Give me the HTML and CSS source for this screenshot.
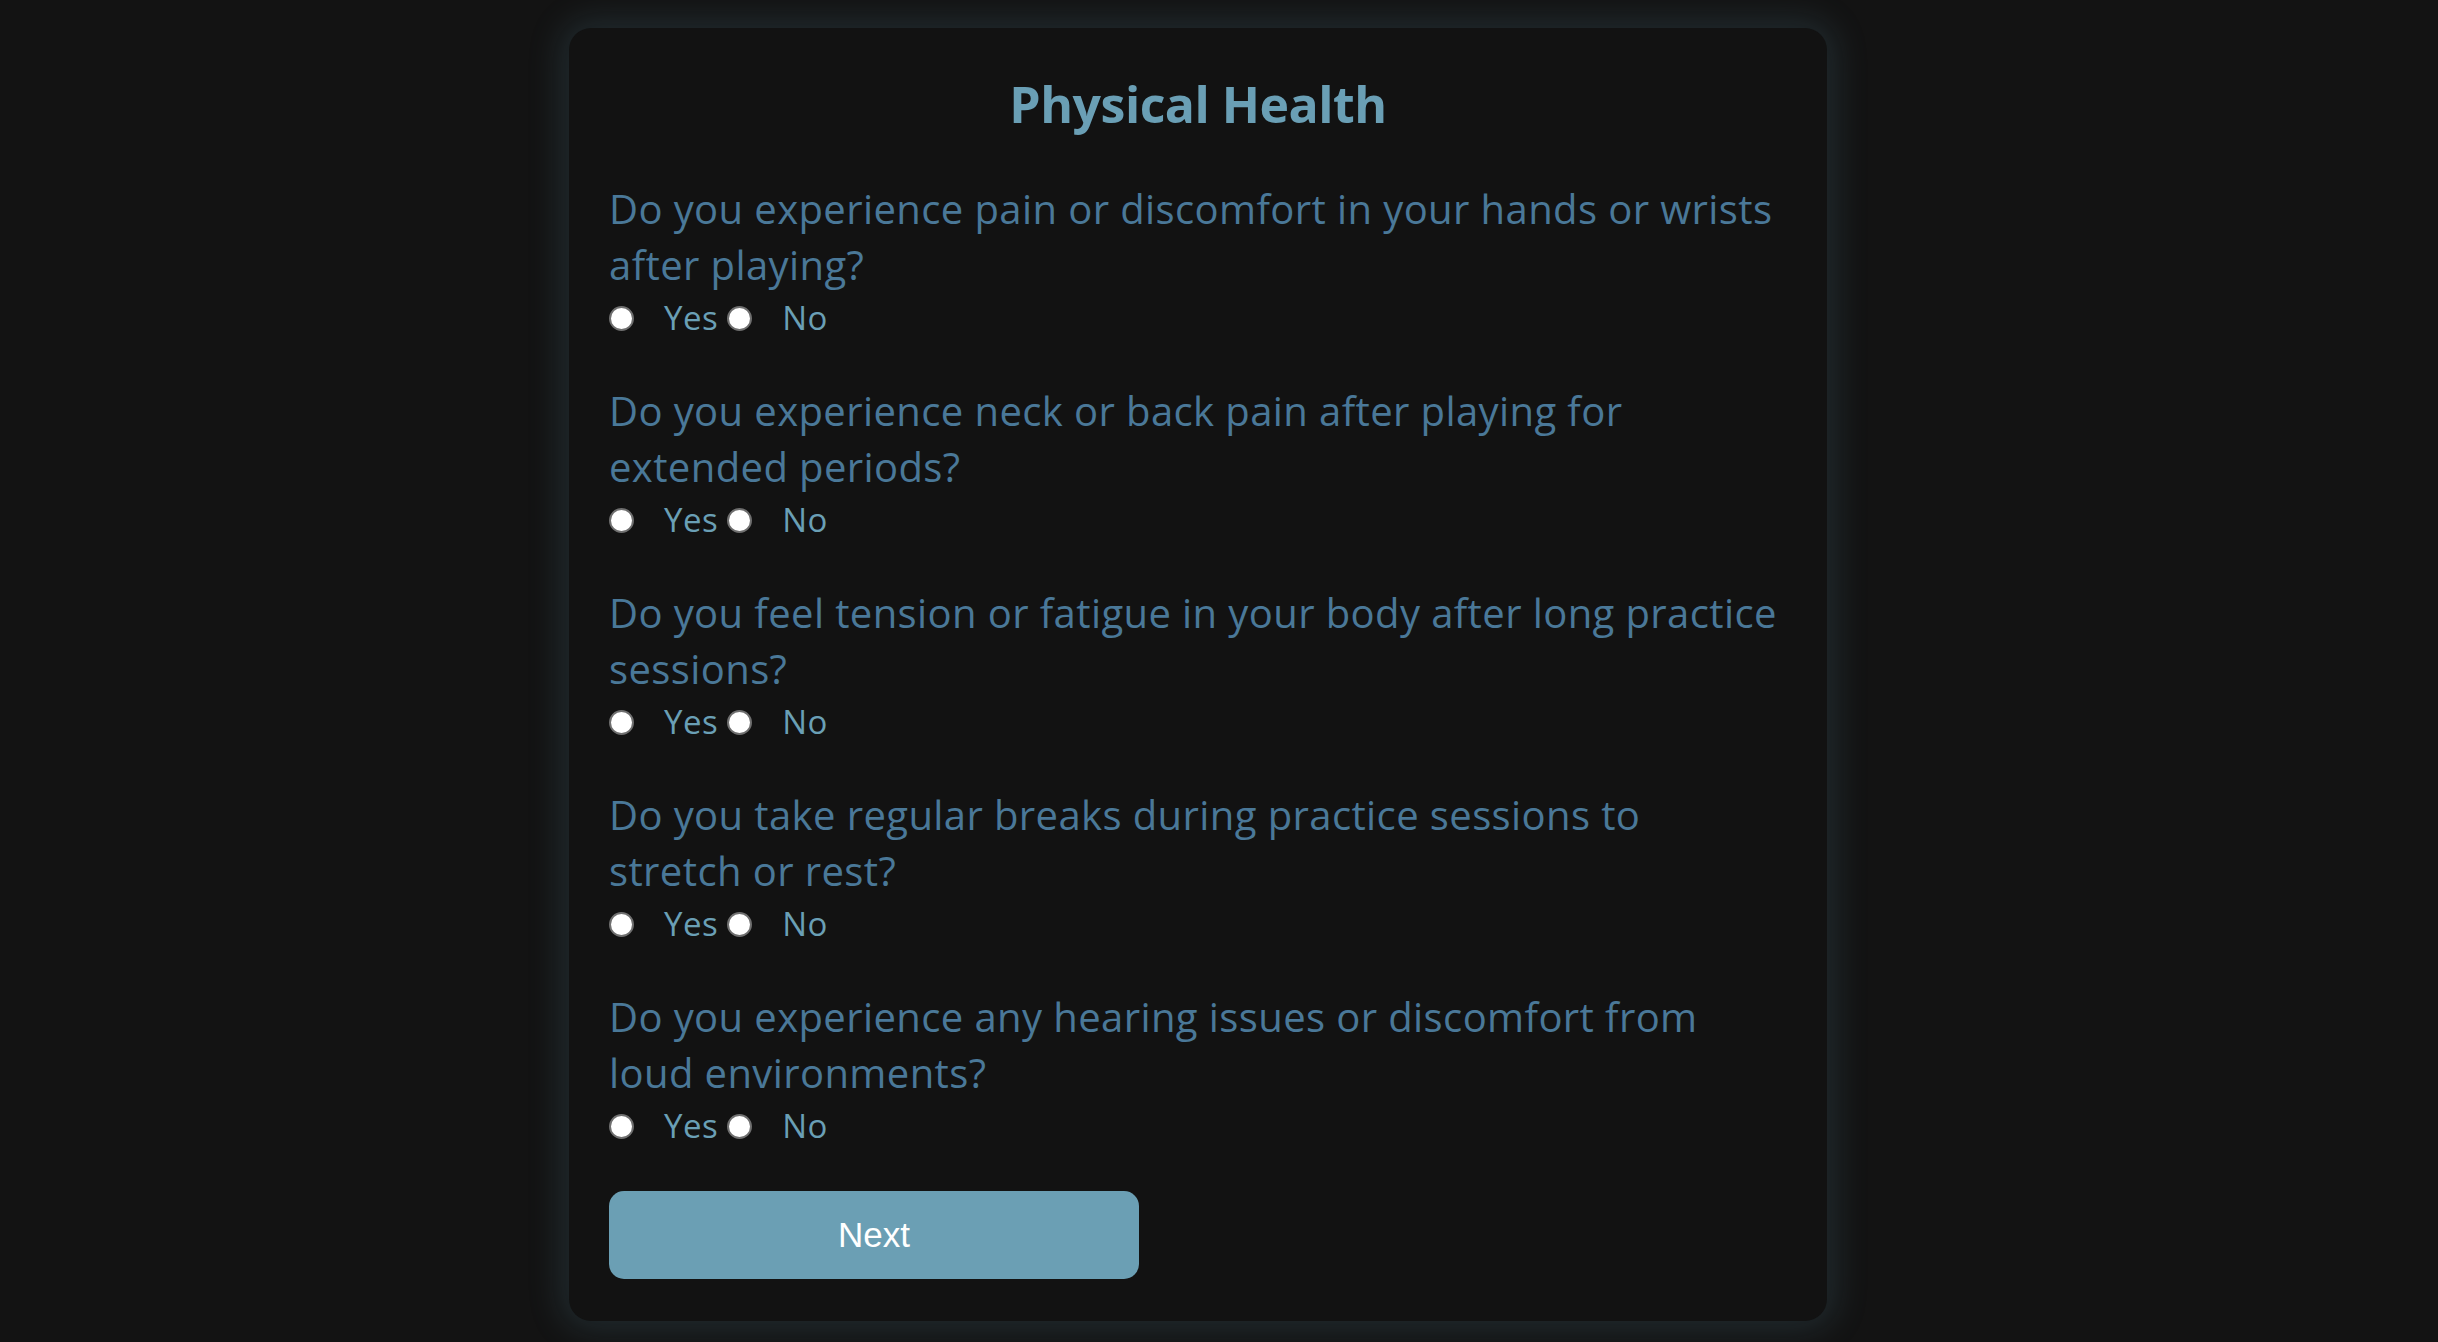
FILE: index.html
```html
<!DOCTYPE html>
<html lang="en">
<head>
<meta charset="utf-8">
<title>Physical Health</title>
<link rel="stylesheet" href="styles.css">
</head>
<body>
<main class="page">
  <form class="card">
    <h2 class="title">Physical Health</h2>
    <div class="question">
      <p class="question-text">Do you experience pain or discomfort in your hands or wrists<br>after playing?</p>
      <div class="options">
        <input class="radio" type="radio" name="q1" id="q1y"><label class="opt-label" for="q1y">Yes</label>
        <input class="radio" type="radio" name="q1" id="q1n"><label class="opt-label" for="q1n">No</label>
      </div>
    </div>
    <div class="question">
      <p class="question-text">Do you experience neck or back pain after playing for<br>extended periods?</p>
      <div class="options">
        <input class="radio" type="radio" name="q2" id="q2y"><label class="opt-label" for="q2y">Yes</label>
        <input class="radio" type="radio" name="q2" id="q2n"><label class="opt-label" for="q2n">No</label>
      </div>
    </div>
    <div class="question">
      <p class="question-text">Do you feel tension or fatigue in your body after long practice<br>sessions?</p>
      <div class="options">
        <input class="radio" type="radio" name="q3" id="q3y"><label class="opt-label" for="q3y">Yes</label>
        <input class="radio" type="radio" name="q3" id="q3n"><label class="opt-label" for="q3n">No</label>
      </div>
    </div>
    <div class="question">
      <p class="question-text">Do you take regular breaks during practice sessions to<br>stretch or rest?</p>
      <div class="options">
        <input class="radio" type="radio" name="q4" id="q4y"><label class="opt-label" for="q4y">Yes</label>
        <input class="radio" type="radio" name="q4" id="q4n"><label class="opt-label" for="q4n">No</label>
      </div>
    </div>
    <div class="question">
      <p class="question-text">Do you experience any hearing issues or discomfort from<br>loud environments?</p>
      <div class="options">
        <input class="radio" type="radio" name="q5" id="q5y"><label class="opt-label" for="q5y">Yes</label>
        <input class="radio" type="radio" name="q5" id="q5n"><label class="opt-label" for="q5n">No</label>
      </div>
    </div>
    <button class="next" type="button">Next</button>
  </form>
</main>
</body>
</html>
```
FILE: styles.css
```css
* { box-sizing: border-box; }
html, body { margin: 0; padding: 0; }
body {
  background: #131313;
  font-family: "Open Sans", "Noto Sans", sans-serif;
  height: 1342px;
  overflow: hidden;
}
.page {
  display: flex;
  justify-content: center;
  padding-top: 28px;
  padding-right: 42px;
}
.card {
  width: 1258px;
  background: #121212;
  border-radius: 22px;
  box-shadow: 0 0 34px 8px rgba(95, 150, 170, 0.19);
  padding: 42px 40px 42px 40px;
  display: flex;
  flex-direction: column;
  align-items: flex-start;
}
.title {
  align-self: center;
  margin: 0 0 43px;
  font-size: 50px;
  font-weight: 700;
  color: #6a9fb5;
  line-height: 68px;
  letter-spacing: -0.5px;
}
.question {
  margin-bottom: 48px;
  width: 100%;
}
.question-text {
  margin: 0;
  font-size: 40px;
  line-height: 56px;
  color: #4a7898;
  letter-spacing: 0.4px;
  white-space: nowrap;
}
.options {
  display: flex;
  align-items: center;
  height: 34px;
  margin-top: 8px;
}
.radio {
  appearance: none;
  -webkit-appearance: none;
  width: 25px;
  height: 25px;
  margin: 0;
  border-radius: 50%;
  background: #ffffff;
  border: 2px solid #6f6f6f;
  flex: none;
}
.opt-label {
  margin-left: 30px;
  margin-right: 9px;
  font-size: 33px;
  letter-spacing: 0.5px;
  color: #6a9fb5;
  line-height: 34px;
}
.next {
  width: 530px;
  height: 88px;
  border: none;
  border-radius: 15px;
  background: #6b9fb4;
  color: #ffffff;
  font-family: "Liberation Sans", Arial, sans-serif;
  font-size: 35px;
}
```
